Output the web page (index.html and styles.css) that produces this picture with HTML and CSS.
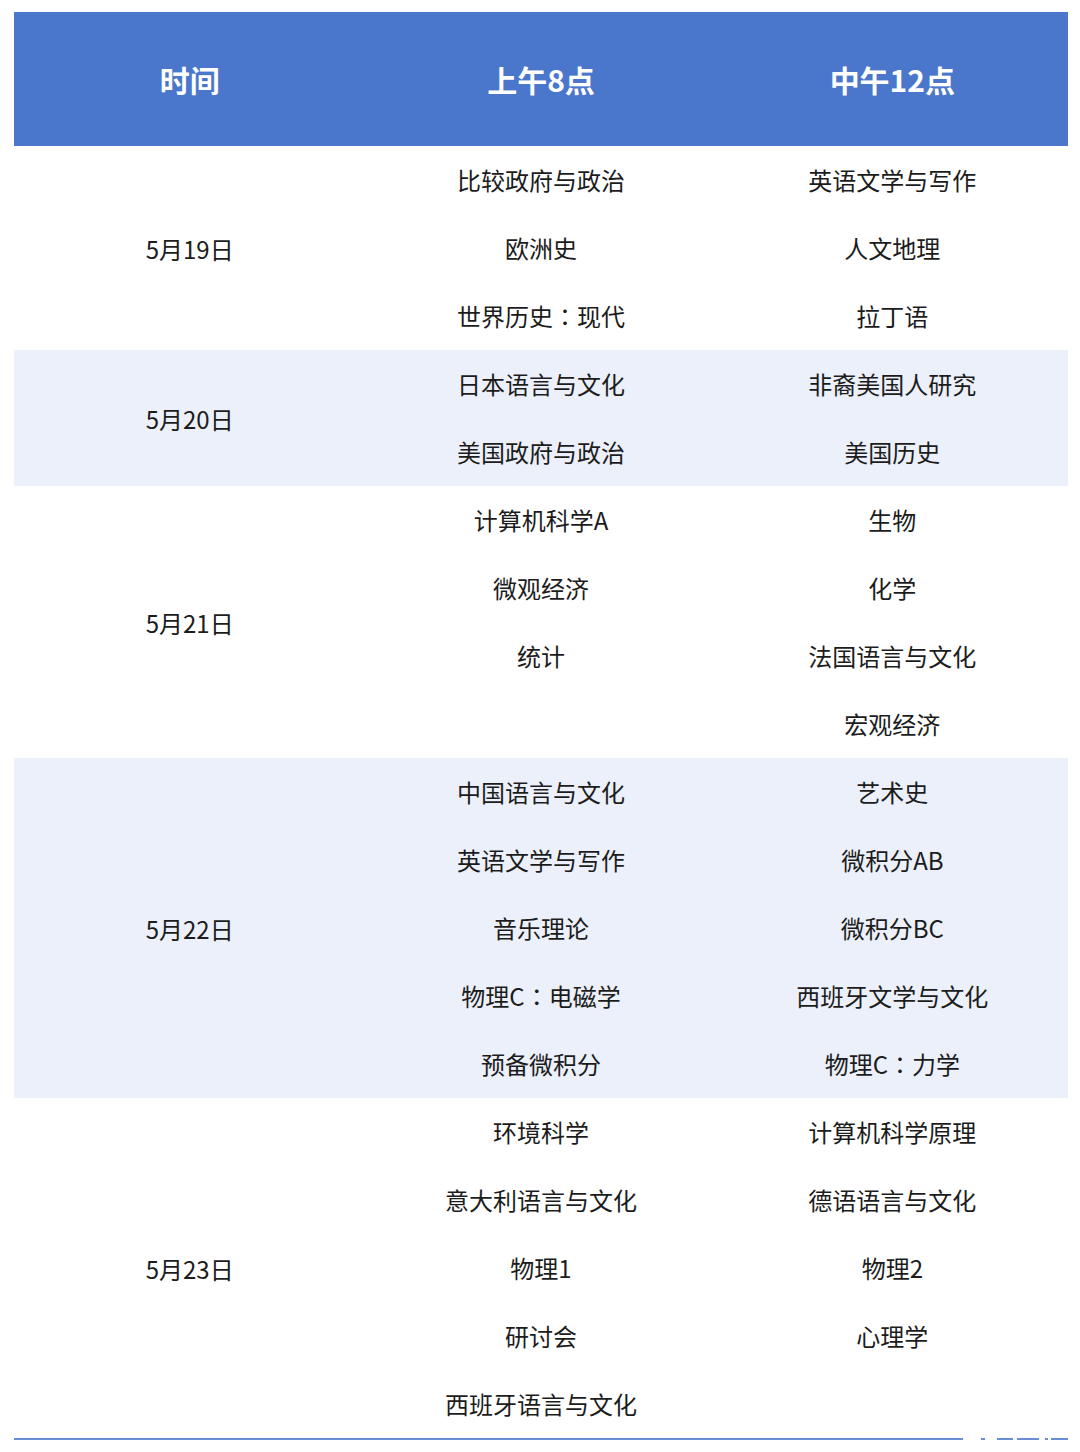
FILE: index.html
```html
<!DOCTYPE html>
<html lang="zh">
<head>
<meta charset="utf-8">
<link rel="stylesheet" href="styles.css">
</head>
<body>
<div class="sheet">
<table class="schedule">
  <thead>
    <tr><th>时间</th><th>上午8点</th><th>中午12点</th></tr>
  </thead>
  <tbody>
    <tr>
      <td class="date">5月19日</td>
      <td><div>比较政府与政治</div><div>欧洲史</div><div>世界历史<span class="colon" lang="ja">：</span>现代</div></td>
      <td><div>英语文学与写作</div><div>人文地理</div><div>拉丁语</div></td>
    </tr>
    <tr class="alt">
      <td class="date">5月20日</td>
      <td><div>日本语言与文化</div><div>美国政府与政治</div></td>
      <td><div>非裔美国人研究</div><div>美国历史</div></td>
    </tr>
    <tr>
      <td class="date">5月21日</td>
      <td><div>计算机科学A</div><div>微观经济</div><div>统计</div></td>
      <td><div>生物</div><div>化学</div><div>法国语言与文化</div><div>宏观经济</div></td>
    </tr>
    <tr class="alt">
      <td class="date">5月22日</td>
      <td><div>中国语言与文化</div><div>英语文学与写作</div><div>音乐理论</div><div>物理C<span class="colon" lang="ja">：</span>电磁学</div><div>预备微积分</div></td>
      <td><div>艺术史</div><div>微积分AB</div><div>微积分BC</div><div>西班牙文学与文化</div><div>物理C<span class="colon" lang="ja">：</span>力学</div></td>
    </tr>
    <tr>
      <td class="date">5月23日</td>
      <td><div>环境科学</div><div>意大利语言与文化</div><div>物理1</div><div>研讨会</div><div>西班牙语言与文化</div></td>
      <td><div>计算机科学原理</div><div>德语语言与文化</div><div>物理2</div><div>心理学</div></td>
    </tr>
  </tbody>
</table>
<div class="rule">
  <span class="seg main"></span>
  <span class="seg s1"></span>
  <span class="seg s2"></span>
  <span class="seg s3"></span>
  <span class="seg s4"></span>
  <span class="seg s5"></span>
</div>
</div>
</body>
</html>
```

FILE: styles.css
```css
html, body {
  margin: 0;
  padding: 0;
  background: #ffffff;
}
body {
  font-family: "Noto Sans CJK SC", "Noto Sans", sans-serif;
  color: #1c1c1c;
}
.sheet {
  padding: 12px 12px 0 14px;
}
.schedule {
  width: 1054px;
  border-collapse: collapse;
  table-layout: fixed;
}
.schedule th {
  background: #4a76cb;
  color: #ffffff;
  font-size: 30px;
  font-weight: 700;
  height: 134px;
  padding: 0;
  text-align: center;
  vertical-align: middle;
}
.schedule td {
  padding: 0;
  text-align: center;
  vertical-align: top;
  font-size: 24px;
}
.schedule td.date {
  vertical-align: middle;
}
.schedule td div {
  height: 68px;
  line-height: 68px;
}
.colon {
  font-family: "Noto Sans CJK JP", "Noto Sans CJK KR", "Noto Sans CJK SC", sans-serif;
}
.schedule tr.alt td {
  background: #ebf0fa;
}
.rule {
  display: flex;
  align-items: center;
  height: 2px;
}
.seg {
  display: block;
  height: 2px;
  background: #6a8ed6;
}
.main { width: 950px; }
.s1 { width: 4px; margin-left: 18px; }
.s2 { width: 16px; margin-left: 12px; }
.s3 { width: 22px; margin-left: 4px; }
.s4 { width: 3px; margin-left: 6px; }
.s5 { width: 17px; margin-left: 3px; }
```
